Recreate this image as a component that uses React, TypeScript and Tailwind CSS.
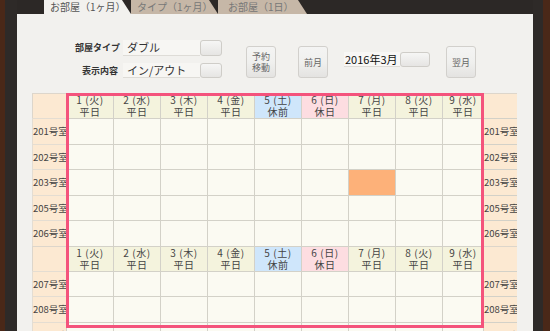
import React from "react";

const days = [
  { d: "1 (火)", t: "平日", kind: "w" },
  { d: "2 (水)", t: "平日", kind: "w" },
  { d: "3 (木)", t: "平日", kind: "w" },
  { d: "4 (金)", t: "平日", kind: "w" },
  { d: "5 (土)", t: "休前", kind: "sat" },
  { d: "6 (日)", t: "休日", kind: "sun" },
  { d: "7 (月)", t: "平日", kind: "w" },
  { d: "8 (火)", t: "平日", kind: "w" },
  { d: "9 (水)", t: "平日", kind: "w" },
];

const widths = ["w-[47px]", "w-[47px]", "w-[47px]", "w-[47px]", "w-[47px]", "w-[47px]", "w-[47px]", "w-[47px]", "w-[41px]"];

const headBg: Record<string, string> = {
  w: "bg-[#f4f3dd]",
  sat: "bg-[#cfe6fb]",
  sun: "bg-[#fddde1]",
};

function HeaderRow() {
  return (
    <div className="flex h-[25px]">
      <div className="w-[34px] shrink-0 bg-[#fce9d2] border-t border-l border-[#ddd6cb]" />
      {days.map((day, i) => (
        <div
          key={i}
          className={`${widths[i]} shrink-0 ${headBg[day.kind]} border-t border-l border-[#d3d1c8] flex flex-col items-center justify-center leading-[12px] text-[10px] tracking-[0.6px] text-[#444]`}
        >
          <span>{day.d}</span>
          <span>{day.t}</span>
        </div>
      ))}
      <div className="w-[34px] shrink-0 bg-[#fce9d2] border-t border-l border-[#ddd6cb]" />
    </div>
  );
}

function RoomRow({ room, filled, h }: { room: string; filled?: number; h: string }) {
  return (
    <div className={`flex ${h}`}>
      <div className="w-[34px] shrink-0 bg-[#fce9d2] border-t border-l border-[#e4ddd2] flex items-center overflow-hidden whitespace-nowrap text-[9.5px] text-[#444]">
        {room}
      </div>
      {widths.map((w, i) => (
        <div
          key={i}
          className={`${w} shrink-0 border-t border-l border-[#d3d1c8] ${filled === i ? "bg-[#fdb179]" : "bg-[#fbfaf2]"}`}
        />
      ))}
      <div className="w-[34px] shrink-0 bg-[#fce9d2] border-t border-l border-[#d3d1c8] flex items-center overflow-hidden whitespace-nowrap text-[9.5px] text-[#444]">
        {room}
      </div>
    </div>
  );
}

function SelectBox({ value, h }: { value: string; h: string }) {
  return (
    <div className={`flex w-[99px] ${h}`}>
      <div className="flex-1 bg-[#f7f6f3] border-b border-[#dedcd7] text-[11px] text-[#333] pl-1 flex items-center">
        {value}
      </div>
      <div className="w-[22px] rounded-[3px] border border-[#cfcdc8] bg-gradient-to-b from-[#f6f6f5] to-[#e6e5e3]" />
    </div>
  );
}

function Btn({ children }: { children: React.ReactNode }) {
  return (
    <div className="w-[30px] h-[32px] rounded-[3px] border border-[#d2d0cc] bg-gradient-to-b from-[#f4f4f3] via-[#f0f0ee] to-[#e4e3e1] flex flex-col items-center justify-center text-[9px] leading-[11px] text-[#666]">
      {children}
    </div>
  );
}

export default function App() {
  return (
    <div
      className="w-[550px] h-[331px] overflow-hidden flex bg-[#2c2826]"
      style={{ fontFamily: '"Noto Sans CJK JP", "Noto Sans", sans-serif' }}
    >
      <div className="w-[5px] shrink-0 bg-[#4a2818]" />
      <div className="w-[12px] shrink-0 bg-[#2e2a28]" />
      <div className="w-[516px] shrink-0 flex flex-col">
        {/* tabs */}
        <div className="h-[14px] flex pl-[27px] shrink-0">
          <div
            className="w-[87px] h-full bg-[#f2f1ee] text-[10px] leading-[14px] text-[#555] pl-[6px]"
            style={{ clipPath: "polygon(0 0, calc(100% - 9px) 0, 100% 100%, 0 100%)" }}
          >
            お部屋（1ヶ月）
          </div>
          <div
            className="w-[87px] h-full bg-[#c6b7a7] text-[10px] leading-[14px] text-[#777] pl-[6px]"
            style={{ clipPath: "polygon(0 0, calc(100% - 9px) 0, 100% 100%, 0 100%)" }}
          >
            タイプ（1ヶ月）
          </div>
          <div
            className="w-[89px] h-full bg-[#c6b7a7] text-[10px] leading-[14px] text-[#777] pl-[10px]"
            style={{ clipPath: "polygon(0 0, calc(100% - 9px) 0, 100% 100%, 0 100%)" }}
          >
            お部屋（1日）
          </div>
        </div>

        {/* panel */}
        <div className="flex-1 bg-[#f2f1ee] flex flex-col">
          <div className="h-[79px] shrink-0 flex items-start pl-[58px]">
            <div className="flex flex-col gap-[7px] mt-[26px]">
              <div className="flex items-center gap-[5px]">
                <span className="w-[43px] text-right text-[9px] text-[#333] font-bold whitespace-nowrap">部屋タイプ</span>
                <SelectBox value="ダブル" h="h-[16px]" />
              </div>
              <div className="flex items-center gap-[5px]">
                <span className="w-[43px] text-right text-[9px] text-[#333] font-bold whitespace-nowrap">表示内容</span>
                <SelectBox value="イン/アウト" h="h-[15px]" />
              </div>
            </div>
            <div className="ml-[24px] mt-[32px]">
              <Btn>
                <span>予約</span>
                <span>移動</span>
              </Btn>
            </div>
            <div className="ml-[22px] mt-[32px]">
              <Btn>前月</Btn>
            </div>
            <div className="ml-[16px] mt-[38px] flex w-[86px] h-[15px]">
              <div className="flex-1 bg-[#f8f7f5] border-b border-[#dedcd7] text-[11px] text-[#111] flex items-center pl-px">
                2016年3月
              </div>
              <div className="w-[30px] rounded-[3px] border border-[#cfcdc8] bg-gradient-to-b from-[#f6f6f5] to-[#e6e5e3]" />
            </div>
            <div className="ml-[16px] mt-[32px]">
              <Btn>翌月</Btn>
            </div>
          </div>

          {/* table */}
          <div className="relative ml-[15px] w-[485px]">
            <HeaderRow />
            <RoomRow room="201号室" h="h-[25.5px]" />
            <RoomRow room="202号室" h="h-[25.5px]" />
            <RoomRow room="203号室" h="h-[25.5px]" filled={6} />
            <RoomRow room="205号室" h="h-[25.5px]" />
            <RoomRow room="206号室" h="h-[25.5px]" />
            <HeaderRow />
            <RoomRow room="207号室" h="h-[25.5px]" />
            <RoomRow room="208号室" h="h-[25.5px]" />
            <RoomRow room="209号室" h="h-[25.5px]" />
            <div className="absolute left-[34px] top-0 w-[418px] h-[235px] border-[3px] border-[#f4537c] pointer-events-none" />
          </div>
        </div>
      </div>
      <div className="w-[10px] shrink-0 bg-[#2e2a28]" />
      <div className="w-[7px] shrink-0 bg-[#4a2818]" />
    </div>
  );
}
